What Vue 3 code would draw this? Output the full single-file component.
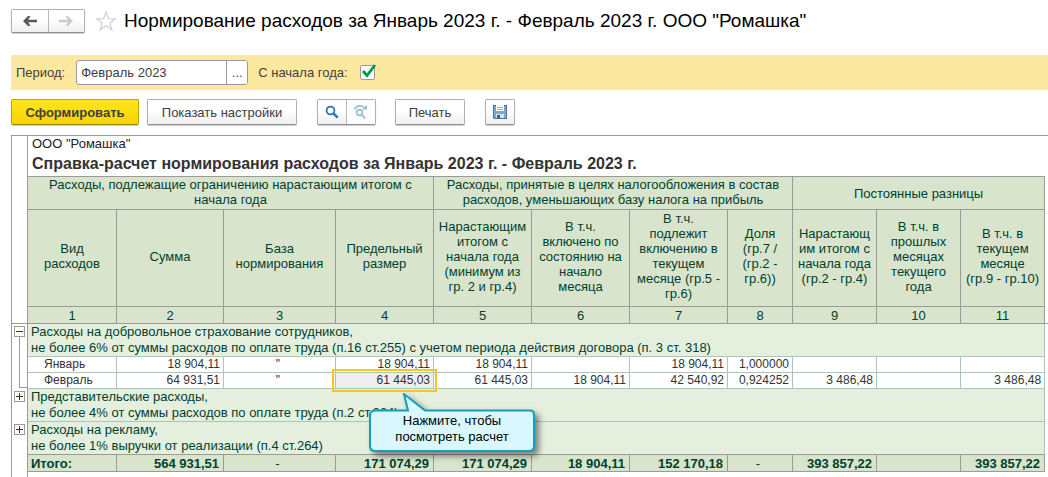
<script setup>
import { ref } from 'vue'

const period = ref('Февраль 2023')
const fromYearStart = ref(true)

const widths = [89, 107, 112, 98, 98, 98, 98, 65, 84, 84, 84]
const headings = [
  'Вид\nрасходов',
  'Сумма',
  'База\nнормирования',
  'Предельный\nразмер',
  'Нарастающим\nитогом с\nначала года\n(минимум из\nгр. 2 и гр.4)',
  'В т.ч.\nвключено по\nсостоянию на\nначало\nмесяца',
  'В т.ч.\nподлежит\nвключению в\nтекущем\nмесяце (гр.5 -\nгр.6)',
  'Доля\n(гр.7 /\n(гр.2 -\nгр.6))',
  'Нарастающ\nим итогом с\nначала года\n(гр.2 - гр.4)',
  'В т.ч. в\nпрошлых\nмесяцах\nтекущего\nгода',
  'В т.ч. в\nтекущем\nмесяце\n(гр.9 - гр.10)'
]
const months = [
  { name: 'Январь', values: ['18 904,11', '"', '18 904,11', '18 904,11', '', '18 904,11', '1,000000', '', '', ''] },
  { name: 'Февраль', values: ['64 931,51', '"', '61 445,03', '61 445,03', '18 904,11', '42 540,92', '0,924252', '3 486,48', '', '3 486,48'], selected: 2 }
]
const closedGroups = [
  'Представительские расходы,\nне более 4% от суммы расходов по оплате труда (п.2 ст.264)',
  'Расходы на рекламу,\nне более 1% выручки от реализации (п.4 ст.264)'
]
const totals = ['564 931,51', '-', '171 074,29', '171 074,29', '18 904,11', '152 170,18', '-', '393 857,22', '', '393 857,22']
const isMark = (v) => v === '"' || v === '-'
</script>

<template>
  <main class="page">
    <header class="head">
      <div class="pair nav">
        <button type="button" aria-label="Назад">
          <svg width="16" height="12" viewBox="0 0 16 12"><path d="M1 6l5-5h2.500L6.200 4.700H15v2.600H6.200L8.500 11H6z" fill="#5a5a5a" /></svg>
        </button>
        <button type="button" aria-label="Вперед" disabled>
          <svg width="16" height="12" viewBox="0 0 16 12"><path d="M15 6l-5-5H7.500l2.300 3.700H1v2.600h8.800L7.500 11H10z" fill="#cbcbcb" /></svg>
        </button>
      </div>
      <button type="button" class="star" aria-label="В избранное">
        <svg width="20" height="20" viewBox="0 0 20 20"><path d="M10 1l2.400 6.600 7 .2-5.600 4.200 2.100 6.900L10 14.800l-5.900 4.100 2.100-6.900L.6 7.800l7-.2z" fill="#fff" stroke="#d2d2d2" stroke-width="1.300" /></svg>
      </button>
      <h1>Нормирование расходов за Январь 2023 г. - Февраль 2023 г. ООО "Ромашка"</h1>
    </header>

    <section class="filter">
      <label for="period">Период:</label>
      <div class="field">
        <input id="period" v-model="period" type="text" />
        <button type="button" aria-label="Выбрать период">...</button>
      </div>
      <label for="year">С начала года:</label>
      <span class="check">
        <input id="year" v-model="fromYearStart" type="checkbox" />
        <svg v-if="fromYearStart" width="16" height="16" viewBox="0 0 16 16"><path d="M2 7l4 4.500L14 1" fill="none" stroke="#009846" stroke-width="2.800" /></svg>
      </span>
    </section>

    <section class="tools">
      <button type="button" class="btn primary">Сформировать</button>
      <button type="button" class="btn settings">Показать настройки</button>
      <div class="pair search">
        <button type="button" aria-label="Найти">
          <svg width="14" height="14" viewBox="0 0 14 14"><circle cx="5.500" cy="5.500" r="3.900" fill="none" stroke="#2a78ab" stroke-width="1.800" /><path d="M8.300 8.300l4.400 4.400" stroke="#2a78ab" stroke-width="2.500" /></svg>
        </button>
        <button type="button" aria-label="Найти далее" disabled>
          <svg width="16" height="16" viewBox="0 0 16 16"><g fill="none" stroke="#97bfd5"><path d="M1.500 5.500C3.500 1 9 .8 12.500 4.500" stroke-width="1.800" /><circle cx="6.500" cy="8.500" r="2.900" stroke-width="1.600" /><path d="M8.600 10.800l3.400 3.500" stroke-width="2" /></g><path d="M9.500 5.500H14V1z" fill="#97bfd5" /></svg>
        </button>
      </div>
      <button type="button" class="btn print">Печать</button>
      <button type="button" class="btn save" aria-label="Сохранить">
        <svg width="14" height="14" viewBox="0 0 14 14"><path d="M0 0h14v14H1L0 13z" fill="#4a7298" /><path d="M1 1h12v12H1z" fill="#7ea6cf" /><path d="M3 0h8v6H3z" fill="#fff" /><path d="M4 2.500h6M4 4.500h6" stroke="#9db4cc" /><path d="M3 9h8v4H3z" fill="#dce4e8" /><path d="M4 10h3v3H4z" fill="#3d5f80" /></svg>
      </button>
    </section>

    <table class="sheet">
      <colgroup>
        <col class="gutter-col" />
        <col v-for="(w, i) in widths" :key="i" :style="{ width: w + 'px' }" />
        <col class="tail-col" />
      </colgroup>
      <thead>
        <tr class="caption">
          <td class="gutter"></td>
          <td colspan="11">
            <div class="firm">ООО "Ромашка"</div>
            <h2>Справка-расчет нормирования расходов за Январь 2023 г. - Февраль 2023 г.</h2>
          </td>
          <td class="tail"></td>
        </tr>
        <tr class="bands">
          <td class="gutter"></td>
          <th colspan="4" class="top">{{ 'Расходы, подлежащие ограничению нарастающим итогом с\nначала года' }}</th>
          <th colspan="4" class="top">{{ 'Расходы, принятые в целях налогообложения в состав\nрасходов, уменьшающих базу налога на прибыль' }}</th>
          <th colspan="3">Постоянные разницы</th>
          <td class="tail"></td>
        </tr>
        <tr class="names">
          <td class="gutter"></td>
          <th v-for="h in headings" :key="h">{{ h }}</th>
          <td class="tail"></td>
        </tr>
        <tr class="numbers">
          <td class="gutter edge"></td>
          <th v-for="n in 11" :key="n">{{ n }}</th>
          <td class="tail edge"></td>
        </tr>
      </thead>
      <tbody>
        <tr class="group">
          <td class="gutter" rowspan="3">
            <div class="tree">
              <button type="button" class="toggle" aria-label="Свернуть"></button>
              <span class="branch"></span>
            </div>
          </td>
          <td colspan="11" class="text">{{ 'Расходы на добровольное страхование сотрудников,\nне более 6% от суммы расходов по оплате труда (п.16 ст.255) с учетом периода действия договора (п. 3 ст. 318)' }}</td>
          <td class="tail"></td>
        </tr>
        <tr v-for="m in months" :key="m.name" class="month">
          <td class="cell name">{{ m.name }}</td>
          <td v-for="(v, i) in m.values" :key="i" class="cell" :class="{ mark: isMark(v), selected: m.selected === i }">
            {{ v }}
            <div v-if="m.selected === i" class="callout">
              <svg width="176" height="72" viewBox="0 0 176 72"><path d="M6 17.500H38L34 1l21 16.500H160Q164 17.500 164 21.500V53Q164 58 159 58H5Q0 58 0 53V22Q0 17.500 6 17.500Z" transform="translate(1 0)" fill="#d9f7ff" stroke="#12a0bd" stroke-width="2" /></svg>
              <p>Нажмите, чтобы<br />посмотреть расчет</p>
            </div>
          </td>
          <td class="tail"></td>
        </tr>
        <tr v-for="g in closedGroups" :key="g" class="group">
          <td class="gutter"><button type="button" class="toggle plus" aria-label="Развернуть"></button></td>
          <td colspan="11" class="text">{{ g }}</td>
          <td class="tail"></td>
        </tr>
        <tr class="total">
          <td class="gutter"></td>
          <td class="cell name">Итого:</td>
          <td v-for="(v, i) in totals" :key="i" class="cell" :class="{ mark: isMark(v) }">{{ v }}</td>
          <td class="tail"></td>
        </tr>
        <tr class="rest">
          <td class="gutter"></td>
          <td colspan="12"></td>
        </tr>
      </tbody>
    </table>
  </main>
</template>

<style>
body {
  margin: 0;
  background: #fff;
}
</style>

<style scoped>
.page {
  padding-left: 11px;
  font-family: "Liberation Sans", Arial, sans-serif;
  font-size: 13px;
  color: #404040;
  overflow: hidden;
}
button,
input {
  font: inherit;
  color: inherit;
  margin: 0;
  padding: 0;
  box-sizing: border-box;
}
svg {
  display: block;
}
.head {
  display: flex;
  align-items: center;
  height: 24px;
  padding-top: 9px;
}
.pair {
  display: flex;
  box-sizing: border-box;
  border: 1px solid #b0b0b0;
  border-bottom-color: #8e8e8e;
  border-radius: 2px;
  box-shadow: 0 1px 1px #ccc;
}
.pair button {
  flex: 1;
  display: flex;
  align-items: center;
  justify-content: center;
  border: 0;
  background: linear-gradient(#fff 40%, #f0f0f0);
}
.pair button + button {
  border-left: 1px solid #b8b8b8;
}
.nav {
  width: 74px;
  height: 24px;
}
.star {
  margin-left: 11px;
  border: 0;
  background: none;
}
h1 {
  margin: 0 0 0 8px;
  font-size: 19px;
  line-height: 24px;
  font-weight: 400;
  color: #000;
  white-space: nowrap;
}
.filter {
  display: flex;
  align-items: center;
  height: 35px;
  margin-top: 22px;
  padding-left: 5px;
  background: #fce99f;
}
.field {
  display: flex;
  width: 172px;
  height: 25px;
  box-sizing: border-box;
  margin: 0 10px 0 11px;
  border: 1px solid #999;
  border-radius: 3px;
  background: #fff;
  overflow: hidden;
}
.field input {
  flex: 1;
  min-width: 0;
  padding-left: 4px;
  border: 0;
  outline: 0;
  background: none;
}
.field button {
  width: 21px;
  border: 0;
  border-left: 1px solid #999;
  background: #fff;
}
.check {
  position: relative;
  margin-left: 12px;
}
.check input {
  display: block;
  appearance: none;
  width: 15px;
  height: 15px;
  border: 1px solid #999;
  border-radius: 2px;
  background: #fff;
}
.check svg {
  position: absolute;
  left: 1px;
  top: -1px;
  pointer-events: none;
}
.tools {
  display: flex;
  height: 26px;
  padding: 9px 0;
}
.btn {
  display: flex;
  align-items: center;
  justify-content: center;
  border: 1px solid #b0b0b0;
  border-bottom-color: #8e8e8e;
  border-radius: 2px;
  background: linear-gradient(#fff 40%, #f0f0f0);
  box-shadow: 0 1px 1px #ccc;
  white-space: nowrap;
}
.primary {
  width: 128px;
  border-color: #c0a500;
  border-bottom-color: #9c8600;
  background: linear-gradient(#ffe61a, #f5d400);
  font-weight: 700;
}
.settings {
  width: 150px;
  margin-left: 8px;
}
.search {
  width: 59px;
  margin-left: 20px;
}
.search button + button {
  background: #fdfdfd;
}
.print {
  width: 70px;
  margin-left: 19px;
}
.save {
  width: 30px;
  margin-left: 20px;
}
.sheet {
  width: 100%;
  margin-top: 1px;
  table-layout: fixed;
  border-collapse: separate;
  border-spacing: 0;
  border-top: 1px solid #999;
  font-size: 13px;
  line-height: 15px;
  color: #333;
}
.gutter-col {
  width: 17px;
}
.tail-col {
  width: 3px;
}
td,
th {
  box-sizing: border-box;
  padding: 0;
  border: 0 solid #9a9a9a;
  font-weight: 400;
  white-space: pre-line;
}
.gutter {
  padding: 2px 0 0 2px;
  border-width: 0 1px;
  vertical-align: top;
}
.edge {
  border-bottom-width: 1px;
}
.caption {
  height: 41px;
}
.caption td[colspan] {
  padding-left: 4px;
  border-bottom-width: 1px;
  vertical-align: top;
}
.firm {
  font-size: 13px;
  line-height: 16px;
  color: #222;
}
h2 {
  margin: 0;
  font-size: 16px;
  line-height: 24px;
  white-space: nowrap;
}
th {
  border-width: 0 1px 1px 0;
  background: #d8e5cc;
  color: #003f2f;
}
.top {
  vertical-align: top;
}
.bands {
  height: 33px;
}
.names {
  height: 97px;
}
.names th {
  padding-bottom: 4px;
}
.numbers,
.total {
  height: 17px;
}
.group {
  height: 33px;
  line-height: 16px;
}
.text {
  padding-left: 3px;
  border-width: 0 1px 1px 0;
  border-color: #a8c6ba;
  background: #e4efdd;
  color: #003f2f;
}
.group:has(+ .total) .text {
  border-bottom-color: #9a9a9a;
}
.month {
  height: 16px;
  font-size: 12px;
}
.cell {
  padding-right: 3px;
  border-width: 0 1px 1px 0;
  text-align: right;
}
.month .cell {
  border-color: #a8c6ba;
}
.month .name {
  padding-left: 16px;
  text-align: left;
}
.cell.mark {
  text-align: center;
}
.selected {
  position: relative;
  background: #eee;
}
.selected::after {
  content: "";
  position: absolute;
  inset: -4px;
  border: 2px solid #fdc41f;
}
.callout {
  position: absolute;
  z-index: 2;
  left: 33px;
  top: 20px;
  width: 166px;
}
.callout svg {
  filter: drop-shadow(4px 4px 3px #0007);
}
.callout p {
  position: absolute;
  left: 0;
  right: 0;
  top: 20px;
  margin: 0;
  font-size: 13px;
  line-height: 16px;
  text-align: center;
  color: #000;
}
.total .cell {
  padding-right: 4px;
  background: #d8e5cc;
  color: #003f2f;
  font-weight: 700;
}
.total .name {
  padding-left: 3px;
  text-align: left;
}
.total .mark {
  font-weight: 400;
}
.rest {
  height: 5px;
}
.toggle {
  display: block;
  width: 11px;
  height: 11px;
  border: 1px solid #999;
  background: linear-gradient(#333, #333) center / 7px 1px no-repeat, #fffef2;
}
.plus {
  background: linear-gradient(#333, #333) center / 7px 1px no-repeat, linear-gradient(#333, #333) center / 1px 7px no-repeat, #fffef2;
}
.tree {
  display: flex;
  flex-direction: column;
  height: 62px;
}
.branch {
  flex: 1;
  margin-left: 5px;
  border: 1px solid #999;
  border-width: 0 0 1px 1px;
}
</style>
